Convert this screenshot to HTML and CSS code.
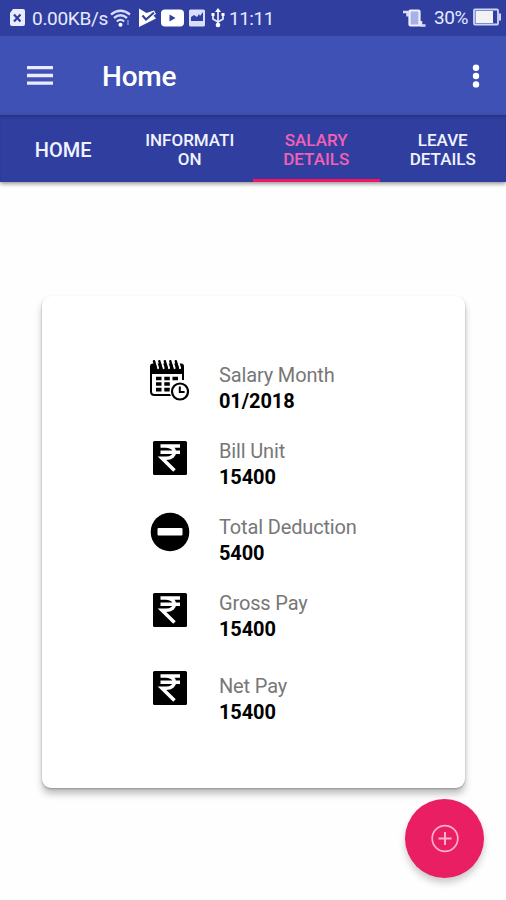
FILE: index.html
```html
<!DOCTYPE html>
<html lang="en">
<head>
<meta charset="utf-8">
<title>Home</title>
<link rel="stylesheet" href="styles.css">
</head>
<body>
<svg class="defs" width="0" height="0" aria-hidden="true">
  <symbol id="rupee" viewBox="0 0 40 40">
    <rect x="3" y="3" width="34" height="34" rx="1.500" fill="#000"/>
    <path d="M10.500 8H30M10.500 14.300H30M16 8c11 0 11.500 12.200 0 12.200h-4L24.500 32.500" fill="none" stroke="#fff" stroke-width="3.500"/>
  </symbol>
</svg>
<div class="screen">
  <div class="status">
    <svg class="status-icons" width="27" height="36" viewBox="0 0 27 36"><path d="M13 9h10q2 0 2 2v13q0 2-2 2H12q-2 0-2-2V13z" fill="#e9ecff"/><path d="M14 14.500l6.500 7M20.500 14.500l-6.500 7" stroke="#303f9f" stroke-width="2.200"/></svg>
    <span class="speed">0.00KB/s</span>
    <svg class="status-icons" width="122" height="36" viewBox="107 0 122 36">
      <g fill="none" stroke="#d5dbfc" stroke-width="2.300"><path d="M111 14.500q9.500-7.500 19 0M114 18q6.500-5.500 13 0M116.800 21.500q3.700-3.200 7.400 0"/></g>
      <circle cx="120.500" cy="24.700" r="2" fill="#fff"/><path d="M128 20v5" stroke="#8591d5" stroke-width="1.500"/>
      <path d="M139 8.500l7.500 4.500 7.500-2.500 2 3.500-2.500 1.500 2.500 3-17 8.500z" fill="#fff"/><path d="M142.500 15.500l3.500 4 8-7" fill="none" stroke="#303f9f" stroke-width="2"/>
      <rect x="161" y="9.500" width="23" height="17" rx="4" fill="#fff"/><path d="M169.500 14.500l6 3.500-6 3.500z" fill="#303f9f"/>
      <rect x="189" y="9.500" width="16" height="17" rx="1.500" fill="#d9defa"/><path d="M191 21v-4l3-2 3 2 2-3 1 2 3-4v9z" fill="#303f9f"/>
      <g fill="none" stroke="#e2e6ff" stroke-width="1.800"><path d="M218 11v13M213 14v5l5 3 5-3v-5"/></g><path d="M218 8l3 4h-6z" fill="#fff"/><circle cx="218" cy="25" r="2.300" fill="#fff"/><path d="M211.500 13h3v3h-3zM221.500 13h3v3h-3z" fill="#fff"/>
    </svg>
    <span class="clock">11:11</span>
    <svg class="status-icons vibrate" width="26" height="36" viewBox="402 0 26 36"><path d="M403 12h4.500v4.500M425.500 25.500h-4.500v-4.500" fill="none" stroke="#d9defa" stroke-width="2.500"/><rect x="409.500" y="10.500" width="10" height="15" rx="1" fill="#a7b1e8" stroke="#eef0ff" stroke-width="2.200"/></svg>
    <span class="percent">30%</span>
    <svg class="status-icons" width="30" height="36" viewBox="472 0 30 36"><rect x="474" y="9.500" width="24" height="15" rx="1" fill="none" stroke="#cfd5fa" stroke-width="1.800"/><rect x="475.500" y="11" width="17.500" height="12" fill="#f2f2f5"/><path d="M500 13.500v7" stroke="#cfd5fa" stroke-width="2"/></svg>
  </div>
  <header class="appbar">
    <svg class="menu" width="28" height="22" viewBox="0 0 28 22"><path d="M1 2.700h26M1 10.500h26M1 18.200h26" stroke="#e9ecff" stroke-width="3.300"/></svg>
    <h1>Home</h1>
    <svg class="more" width="8" height="24" viewBox="0 0 8 24"><g fill="#fff"><circle cx="4" cy="3.700" r="3.200"/><circle cx="4" cy="12" r="3.200"/><circle cx="4" cy="20.400" r="3.200"/></g></svg>
  </header>
  <nav class="tabs">
    <div class="tab tab-large">HOME</div>
    <div class="tab">INFORMATI<br>ON</div>
    <div class="tab tab-active">SALARY<br>DETAILS</div>
    <div class="tab">LEAVE<br>DETAILS</div>
  </nav>
  <main class="card">
    <div class="row">
      <svg class="icon icon-calendar" width="40" height="42" viewBox="0 0 40 42">
        <path d="M4 3.500h28q3 0 3 3V14H1V6.500q0-3 3-3z" fill="#000"/>
        <path d="M2 11v20.500q0 3.500 3.500 3.500H23M34 11v9" fill="none" stroke="#000" stroke-width="2"/>
        <path d="M7 1.500l2 6.500M12.500 1.500l2 6.500M18 1.500l2 6.500M23.500 1.500l2 6.500M29 1.500l2 6.500" stroke="#fff" stroke-width="2.200" stroke-linecap="round"/>
        <path d="M5 1.200l2 7M10.300 1.200l2 7M15.800 1.200l2 7M21.300 1.200l2 7M26.800 1.200l2 7" stroke="#000" stroke-width="2.400" stroke-linecap="round"/>
        <path d="M7 18.500h5.500M15.300 18.500h5.500M23.500 18.500h5.500M7 24h5.500M15.300 24h5.500M7 29.700h5.500M15.300 29.700h5.500" stroke="#000" stroke-width="3.700"/>
        <circle cx="31" cy="31.500" r="10.300" fill="#fff"/><circle cx="31" cy="31.500" r="8" fill="#fff" stroke="#000" stroke-width="2.200"/><path d="M30.800 26.500v5.500h4.800" fill="none" stroke="#000" stroke-width="2"/>
      </svg>
      <div><div class="label">Salary Month</div><div class="value">01/2018</div></div>
    </div>
    <div class="row">
      <svg class="icon" width="40" height="40"><use href="#rupee"/></svg>
      <div><div class="label">Bill Unit</div><div class="value">15400</div></div>
    </div>
    <div class="row">
      <svg class="icon icon-minus" width="40" height="40" viewBox="0 0 40 40"><circle cx="20" cy="20" r="19.300" fill="#000"/><rect x="7.500" y="16" width="25" height="7.500" rx="1" fill="#fff"/></svg>
      <div><div class="label">Total Deduction</div><div class="value">5400</div></div>
    </div>
    <div class="row">
      <svg class="icon" width="40" height="40"><use href="#rupee"/></svg>
      <div><div class="label">Gross Pay</div><div class="value">15400</div></div>
    </div>
    <div class="row row-last">
      <svg class="icon icon-net" width="40" height="40"><use href="#rupee"/></svg>
      <div><div class="label">Net Pay</div><div class="value">15400</div></div>
    </div>
  </main>
  <div class="fab"><svg width="30" height="30" viewBox="0 0 30 30"><g fill="none" stroke="#ffb0cd" stroke-width="1.700"><circle cx="15" cy="14.500" r="12.800"/><path d="M8.500 14.500h13M15 8v13" stroke-width="2"/></g></svg></div>
</div>
</body>
</html>
```
FILE: styles.css
```css
* { box-sizing: border-box; }
body { margin: 0; background: #fefefe; font-family: Roboto, "Liberation Sans", sans-serif; }
.defs { display: block; position: absolute; }
.screen { position: relative; width: 506px; height: 900px; overflow: hidden; }
.status { display: flex; align-items: center; height: 36px; padding-right: 4px; background: #303f9f; color: #e6eaff; font-size: 19px; line-height: 36px; white-space: nowrap; }
.status-icons { flex: none; }
.speed, .clock { position: relative; top: 1px; }
.speed { width: 80px; padding-left: 5px; letter-spacing: -0.3px; }
.clock { letter-spacing: -0.5px; }
.vibrate { margin-left: auto; }
.percent { width: 44px; padding-left: 6px; letter-spacing: -0.4px; }
.appbar { display: flex; align-items: center; height: 79px; padding: 0 26px; background: #3f51b5; color: #fff; }
.menu { margin-top: 1px; }
.appbar h1 { flex: 1; margin: 3px 0 0 48px; font-size: 28px; font-weight: 500; line-height: 34px; letter-spacing: -0.2px; }
.tabs { display: grid; grid-template-columns: repeat(4, 1fr); height: 67px; background: #303f9f; box-shadow: inset 0 3px 3px -1px #24337f, 0 2px 4px rgba(0, 0, 0, .4); }
.tab { display: flex; align-items: center; justify-content: center; padding-top: 6px; border-bottom: 3px solid transparent; color: #f0f3ff; font-size: 17px; font-weight: 500; line-height: 19px; text-align: center; }
.tab-large { font-size: 20px; }
.tab-active { border-color: #f5145f; color: #f45fb5; }
.card { width: 423px; height: 492px; margin: 114px 0 0 42px; padding: 64px 0 0 107px; border-radius: 9px; background: #fff; box-shadow: 0 6px 7px rgba(0, 0, 0, .25), 0 1px 2px rgba(0, 0, 0, .25); }
.row { display: flex; gap: 30px; height: 76px; }
.row-last { margin-top: 7px; }
.icon { flex: none; margin-top: 2px; }
.row .icon-calendar { margin-top: 0; }
.row .icon-minus { margin-top: 0; }
.row .icon-net { margin-top: -3px; }
.row .icon:not(.icon-calendar) { margin-left: 1px; margin-right: -1px; }
.label { height: 28px; padding-top: 1px; color: #777; font-size: 20px; line-height: 29px; letter-spacing: -0.15px; }
.value { color: #000; font-size: 20px; font-weight: 700; line-height: 26px; letter-spacing: -0.1px; }
.fab { position: absolute; left: 405px; top: 799px; display: grid; place-items: center; width: 79px; height: 79px; border-radius: 50%; background: #e91e63; box-shadow: 0 5px 7px rgba(0, 0, 0, .2); }
```
